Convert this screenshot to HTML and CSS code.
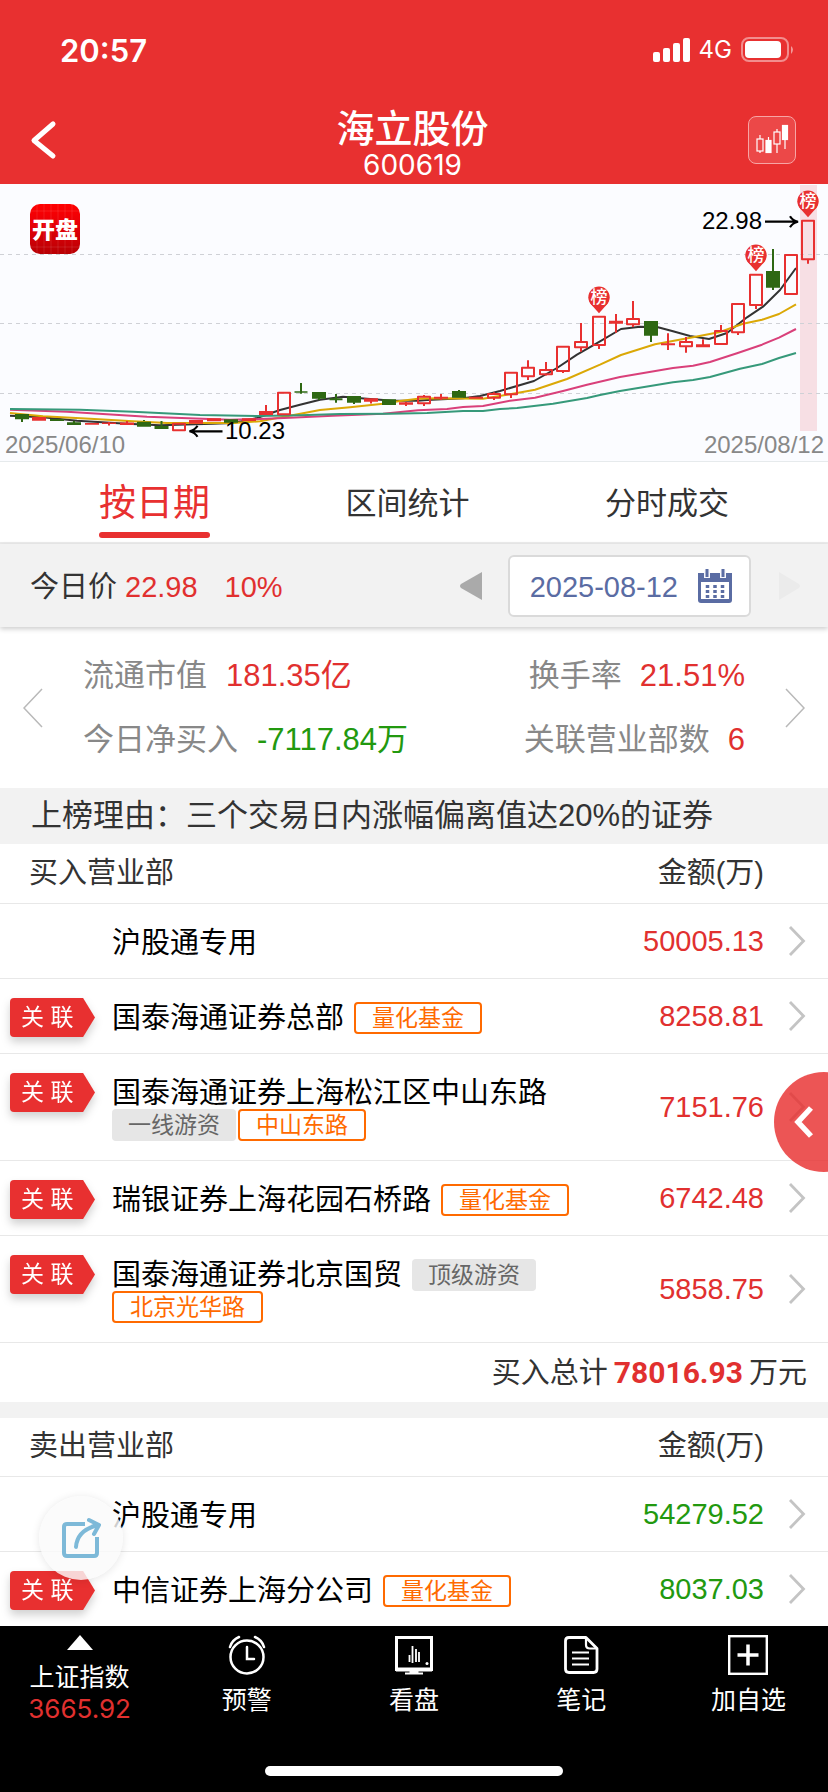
FILE: index.html
```html
<!DOCTYPE html>
<html lang="zh-CN">
<head>
<meta charset="utf-8">
<meta name="viewport" content="width=device-width, initial-scale=1">
<title>海立股份 600619</title>
<link rel="stylesheet" href="styles.css">
</head>
<body>
<div class="app">
  <header class="top">
    <div class="status">
      <span class="status-time">20:57</span>
      <div class="status-right">
        <svg width="37" height="24" viewBox="0 0 37 24" fill="#fff" aria-hidden="true"><rect x="0" y="14" width="7" height="10" rx="2"/><rect x="10" y="10" width="7" height="14" rx="2"/><rect x="20" y="5" width="7" height="19" rx="2"/><rect x="30" y="0" width="7" height="24" rx="2"/></svg>
        <span class="status-net">4G</span>
        <svg width="54" height="26" viewBox="0 0 54 26" aria-hidden="true"><rect x="1" y="1" width="46" height="23" rx="7" fill="none" stroke="#fff" stroke-opacity=".45" stroke-width="2"/><rect x="4" y="4" width="36" height="17" rx="4" fill="#fff"/><path d="M50 9q4 3.500 0 8z" fill="#fff" fill-opacity=".5"/></svg>
      </div>
    </div>
    <div class="titlebar">
      <button class="icon-btn" type="button" aria-label="返回"><svg width="30" height="42" viewBox="0 0 30 42" fill="none" stroke="#fff" stroke-width="5" stroke-linecap="round" stroke-linejoin="round"><path d="M24 5 5 21.500 24 37"/></svg></button>
      <div class="title">
        <h1>海立股份</h1>
        <p>600619</p>
      </div>
      <button class="icon-btn kline-btn" type="button" aria-label="K线"><svg width="34" height="32" viewBox="0 0 34 32" stroke="#fff" fill="none" stroke-width="1.200"><path d="M5 11v4M5 27v2M13.500 13v3M22 5v3M22 20v9M30 15v10"/><rect x="2" y="15" width="6" height="12"/><rect x="11" y="16.500" width="5" height="12" fill="#fff"/><rect x="19" y="8" width="6" height="12"/><rect x="27.500" y="1.500" width="5" height="14" fill="#fff"/></svg></button>
    </div>
  </header>

  <section class="chart">
    <svg class="chart-svg" viewBox="0 0 828 277" role="img" aria-label="日K线图">
      <defs>
        <linearGradient id="logo" x1="0" y1="0" x2="0" y2="1"><stop offset="0" stop-color="#ff0000"/><stop offset=".4" stop-color="#e80008"/><stop offset="1" stop-color="#b80004"/></linearGradient>
        <g id="pin"><path d="M-8.500 6.500 0 16 8.500 6.500z" fill="#e83030"/><circle r="10.700" fill="#e83030"/><text class="pin-text" text-anchor="middle" y="6">榜</text></g>
      </defs>
      <rect x="800" y="1" width="17" height="246" fill="#f7dfe4"/>
      <path d="M0 70.500H828M0 139.500H828M0 209.500H828" stroke="#cfd1d6" stroke-dasharray="4 4"/>
      <g fill="none" stroke-width="2" stroke-linejoin="round">
        <path stroke="#333" d="M10 231.700 43 233.300 77 236.700 127 239.700 160 241.300 213 239.700 233 239 257 234 280 226 300 220.700 320 215.700 343 212.700 367 214.700 393 216.700 418 216.700 427 216 463 214.300 480 212 500 207 534 197 557 184 577 170.700 600 157.300 621 145 640 142.700 658 143.300 673 147.300 690 152 709 155 727 149 747 133.300 763 122.700 780 106 796 84"/>
        <path stroke="#dba806" d="M10 229 43 232.300 90 234.700 133 237.300 167 239 233 239 260 237.300 280 233.500 303 229.300 320 226 350 223.300 383 219.700 400 217 418 214.700 437 214.300 483 214.700 510 210.300 535 205.700 567 195 600 180.700 621 171 655 160.300 693 153.300 720 148 743 139.700 762 135.700 779 130 796 120.300"/>
        <path stroke="#d9407a" d="M10 225.700 67 227.700 147 232.700 230 235.700 260 235 290 233.700 333 231.700 383 229.700 418 226.300 447 225 463 223 483 222 510 216.700 535 213.700 563 207 587 200.700 620 193 673 184 693 181.700 710 178 737 169.300 762 160.700 779 153.700 796 145"/>
        <path stroke="#36997a" d="M10 225 80 225.700 133 227.700 200 231 257 232 300 231.300 340 230 390 229.700 427 229 463 227 483 227 500 225 517 224 553 219.700 587 214 600 211 620 207 673 198.300 693 196 710 193 740 184.700 762 180 779 174 796 169"/>
      </g>
      <g fill="none" stroke="#e83030">
        <path stroke-width="14" d="M39 233v3.700M92 239v1.700M109 238.500v1.500M127 238.500v2.500M196 236v3.700M214 234.300v3M249 234.300v2.700M266 227v4M371 214.300v3.400M406 218.300v2.400M441 212.700v2M476 212.700v2M616 136.700v3M668 159.300v2M703 160.300v3"/>
        <path stroke-width="2" stroke-linejoin="round" d="M173 239.700h12v6.600h-12zM278 208.700h12v21.600h-12zM418 212.700h12v6.600h-12zM488 210h12v3.700h-12zM505 188.700h12v21.600h-12zM522 183.700h12v8.600h-12zM540 186h12v4.300h-12zM557 162.700h12v24.300h-12zM575 158h12v5.300h-12zM593 132.700h12v28.300h-12zM627 135h12v5.300h-12zM680 158h12v4.300h-12zM715 147h12v13h-12zM732 120h12v28.300h-12zM750 90.700h12v30.300h-12zM785 71h12v39h-12zM802 36.700h12v38.600h-12z"/>
        <path stroke-width="2" d="M109 238v3.500M127 237v3M266 221v7M406 218v4M371 217v2.500M424 211v2M424 219v3M441 210v6M494 208.300v2M494 214v2M511 210v4M528 176.300v7.400M528 192v4M546 178v8M546 190v1.500M563 187v2M581 139v19M581 163v4.700M599 161v4M616 130v18.700M633 117v18M633 140v3M668 149.300v16.700M686 153v5M686 162v6.700M703 155.300v6M721 141v6M738 148v3M756 121v4M808 75v4.700"/>
      </g>
      <g fill="none" stroke="#2e6813">
        <path stroke-width="14" d="M22 230v5.300M57 235v2M74 238.300v2.700M144 237.700v5M161.500 242v3M231 235.300v3.400M319 208v6.700M354 212v6.700M389 215.300v5.700M459 207v6.700M651 137v14.700M773 87v16.700"/>
        <path stroke-width="13" d="M301 207.300v1.400M336 214.300v2"/>
        <path stroke-width="2" d="M22 235v3M74 237v2M161.500 237v6M144 237v-1M301 199v10.700M319 214v2M336 210v8.700M354 218v2M459 206v2M651 151v7M773 65v41"/>
      </g>
      <g fill="none" stroke="#000" stroke-width="2.200"><path d="M191 247.300H222.500M197.500 241.800Q195 246 189.500 247.300Q195 248.600 197.500 252.800"/><path d="M765 37.700H796M790 32.200Q792.500 36.400 798 37.700Q792.500 39 790 43.200"/></g>
      <use href="#pin" x="599" y="113.300"/><use href="#pin" x="756" y="71.300"/><use href="#pin" x="808" y="17.300"/>
      <text class="chart-price" x="225" y="255">10.23</text>
      <text class="chart-price" x="702" y="45">22.98</text>
      <text class="chart-date" x="5" y="269">2025/06/10</text>
      <text class="chart-date" x="824" y="269" text-anchor="end">2025/08/12</text>
      <rect x="30" y="20" width="50" height="50" rx="10" fill="url(#logo)"/>
      <path d="M37 20v50M44 20v50M51 20v50M58 20v50M65 20v50M72 20v50M30 27h50M30 63h50" stroke="#fff" stroke-opacity=".1"/>
      <text class="logo-text" x="55" y="54" text-anchor="middle">开盘</text>
    </svg>
  </section>

  <nav class="tabs">
    <a class="tab tab-active" href="#date">按日期</a>
    <a class="tab" href="#range">区间统计</a>
    <a class="tab" href="#ticks">分时成交</a>
  </nav>

  <section class="pricebar">
    <span class="price-label">今日价</span>
    <span class="price-now red">22.98</span>
    <span class="red">10%</span>
    <button class="icon-btn prev-day" type="button" aria-label="前一日"><svg width="22" height="28" viewBox="0 0 22 28"><path d="M22 0v28L1 16q-2-2 0-4z" fill="#aaa"/></svg></button>
    <button class="datebox" type="button"><span>2025-08-12</span>
      <svg width="34" height="34" viewBox="0 0 34 34" aria-hidden="true"><path d="M0 4h34v27q0 3-3 3H3q-3 0-3-3z" fill="#5a6ca3"/><path d="M3 13h28v17H3z" fill="#fff"/><path d="M9 1v8M25 1v8" stroke="#f7f7fb" stroke-width="6"/><path d="M9 0v8M25 0v8" stroke="#5a6ca3" stroke-width="3"/><path d="M9.500 16v13M17 16v13M24.500 16v13" stroke="#5a6ca3" stroke-width="3.500" stroke-dasharray="3 2"/></svg>
    </button>
    <button class="icon-btn" type="button" aria-label="后一日" disabled><svg width="22" height="28" viewBox="0 0 22 28"><path d="M0 0v28L20 16q2-2 0-4z" fill="#ebebeb"/></svg></button>
  </section>

  <section class="stats">
    <button class="icon-btn" type="button" aria-label="上一页"><svg width="20" height="40" viewBox="0 0 20 40" fill="none" stroke="#b9b9b9" stroke-width="1.500"><path d="M19 1 1 20 19 39"/></svg></button>
    <dl class="stats-grid">
      <div><dt>流通市值</dt><dd class="red">181.35亿</dd></div>
      <div><dt>换手率</dt><dd class="red">21.51%</dd></div>
      <div><dt>今日净买入</dt><dd class="green">-7117.84万</dd></div>
      <div><dt>关联营业部数</dt><dd class="red">6</dd></div>
    </dl>
    <button class="icon-btn" type="button" aria-label="下一页"><svg width="20" height="40" viewBox="0 0 20 40" fill="none" stroke="#b9b9b9" stroke-width="1.500"><path d="M1 1 19 20 1 39"/></svg></button>
  </section>

  <p class="reason">上榜理由：三个交易日内涨幅偏离值达20%的证券</p>

  <svg class="defs" aria-hidden="true"><symbol id="chev" viewBox="0 0 18 32"><path d="M2 2 15.500 16 2 30" fill="none" stroke="#c4c4c4" stroke-width="2.800"/></symbol></svg>

  <main class="lists">
    <table class="seats">
      <colgroup><col class="c-badge"><col><col class="c-amt"><col class="c-go"></colgroup>
      <thead><tr><th class="th-name" colspan="2" scope="col">买入营业部</th><th class="th-amt" scope="col">金额(万)</th><th></th></tr></thead>
      <tbody>
        <tr><td></td><td class="seat"><div class="names"><span class="name">沪股通专用</span></div></td><td class="amt red">50005.13</td><td class="go"><svg><use href="#chev"/></svg></td></tr>
        <tr><td class="badge-cell"><div class="badge"><span>关 联</span></div></td><td class="seat"><div class="names"><span class="name">国泰海通证券总部</span><span class="tag">量化基金</span></div></td><td class="amt red">8258.81</td><td class="go"><svg><use href="#chev"/></svg></td></tr>
        <tr><td class="badge-cell"><div class="badge"><span>关 联</span></div></td><td class="seat"><div class="names"><span class="name">国泰海通证券上海松江区中山东路</span><span class="tag tag-grey">一线游资</span><span class="tag">中山东路</span></div></td><td class="amt red">7151.76</td><td class="go"><svg><use href="#chev"/></svg></td></tr>
        <tr><td class="badge-cell"><div class="badge"><span>关 联</span></div></td><td class="seat"><div class="names"><span class="name">瑞银证券上海花园石桥路</span><span class="tag">量化基金</span></div></td><td class="amt red">6742.48</td><td class="go"><svg><use href="#chev"/></svg></td></tr>
        <tr><td class="badge-cell"><div class="badge"><span>关 联</span></div></td><td class="seat"><div class="names"><span class="name">国泰海通证券北京国贸</span><span class="tag tag-grey">顶级游资</span><span class="tag">北京光华路</span></div></td><td class="amt red">5858.75</td><td class="go"><svg><use href="#chev"/></svg></td></tr>
      </tbody>
    </table>
    <p class="total">买入总计<strong>78016.93</strong>万元</p>
    <table class="seats seats-sell">
      <colgroup><col class="c-badge"><col><col class="c-amt"><col class="c-go"></colgroup>
      <thead><tr><th class="th-name" colspan="2" scope="col">卖出营业部</th><th class="th-amt" scope="col">金额(万)</th><th></th></tr></thead>
      <tbody>
        <tr><td></td><td class="seat"><div class="names"><span class="name">沪股通专用</span></div></td><td class="amt green">54279.52</td><td class="go"><svg><use href="#chev"/></svg></td></tr>
        <tr><td class="badge-cell"><div class="badge"><span>关 联</span></div></td><td class="seat"><div class="names"><span class="name">中信证券上海分公司</span><span class="tag">量化基金</span></div></td><td class="amt green">8037.03</td><td class="go"><svg><use href="#chev"/></svg></td></tr>
      </tbody>
    </table>
    <button class="drawer" type="button" aria-label="展开"><svg width="24" height="34" viewBox="0 0 24 34" fill="none" stroke="#fff" stroke-width="5.500"><path d="M19 3 6 17 19 31"/></svg></button>
    <button class="share" type="button" aria-label="分享"><svg width="40" height="42" viewBox="0 0 40 42" fill="none" stroke="#7db9d8" stroke-width="4" stroke-linecap="round" stroke-linejoin="round"><path stroke-linecap="butt" d="M24 7H6Q3 7 3 10V36Q3 39 6 39H33Q36 39 36 36V20"/><path d="M15 30Q16 14 35 8.500M28 3 38 8 33 17"/></svg></button>
  </main>

  <footer class="bottom">
    <nav class="bottom-nav">
      <a class="nav-item" href="#index"><svg width="26" height="15" viewBox="0 0 26 15"><path d="M13 0 26 15H0z" fill="#fff"/></svg><span>上证指数</span><span class="index-value">3665.92</span></a>
      <a class="nav-item" href="#alert"><svg width="40" height="40" viewBox="0 0 40 40" fill="none" stroke="#fff" stroke-width="2.500" stroke-linecap="round"><circle cx="20" cy="22" r="16.500"/><path d="M20 12V24H27M3 12Q5 5 12 2M37 12Q35 5 28 2"/></svg><span>预警</span></a>
      <a class="nav-item" href="#watch"><svg width="40" height="40" viewBox="0 0 40 40" fill="none" stroke="#fff"><rect x="2.500" y="2.500" width="35" height="32" stroke-width="3"/><path d="M2 34.500H38" stroke-width="4"/><path d="M16 36h8v2h-8z" fill="#fff"/><path d="M11 38.500H29" stroke-width="2"/><path d="M15.500 20v7M18.500 11v17M22 14v13M25 17v10" stroke-width="1.800"/><circle cx="33" cy="28.500" r="1.500" fill="#fff" stroke="none"/></svg><span>看盘</span></a>
      <a class="nav-item" href="#notes"><svg width="40" height="40" viewBox="0 0 40 40" fill="none" stroke="#fff" stroke-width="2.800" stroke-linejoin="round"><path d="M25 2.500H8Q4.500 2.500 4.500 6V34Q4.500 37.500 8 37.500H32.500Q36 37.500 36 34V13.500z"/><path d="M25 3V10Q25 13.500 29 13.500H36" stroke-width="2.200"/><path d="M11 17.500H28M11 23.500H28M11 29.500H28" stroke-width="2"/></svg><span>笔记</span></a>
      <a class="nav-item" href="#add"><svg width="40" height="40" viewBox="0 0 40 40" fill="none" stroke="#fff"><rect x="1.200" y="1.200" width="37.600" height="37.600" stroke-width="2.400"/><path d="M20 9.500V30.500M9.500 20H30.500" stroke-width="3.500"/></svg><span>加自选</span></a>
    </nav>
    <div class="home-bar"></div>
  </footer>
</div>
</body>
</html>
```
FILE: styles.css
```css
* { box-sizing: border-box; }

body {
  margin: 0;
  background: #fff;
  color: #333;
  font-family: "Liberation Sans", "Noto Sans CJK SC", sans-serif;
  font-size: 29px;
}

h1, p, dl, dd { margin: 0; }
a { color: inherit; text-decoration: none; }
svg { display: block; }
button { font: inherit; color: inherit; padding: 0; border: 0; background: none; }

.app {
  display: flex;
  flex-direction: column;
  min-height: 100vh;
  overflow: hidden;
}

.red { color: #e1302f; }
.green { color: #22990f; }
.icon-btn { display: flex; align-items: center; justify-content: center; }

/* header */
.top { background: #e83030; color: #fff; }

.status {
  display: flex;
  justify-content: space-between;
  align-items: center;
  height: 100px;
  padding: 0 33px 0 60px;
  font-family: Inter, sans-serif;
}
.status-time { font-size: 31px; font-weight: 600; }
.status-right { display: flex; align-items: center; gap: 9px; }
.status-net { font-size: 24px; line-height: 24px; }

.titlebar {
  display: flex;
  justify-content: space-between;
  height: 84px;
  padding: 0 32px 0 29px;
}
.titlebar > .icon-btn { height: 48px; margin-top: 16px; }
.title { text-align: center; margin-left: 18px; padding-top: 8px; }
.title h1 { font-size: 38px; line-height: 42px; font-weight: 500; }
.title p { font-family: Inter, sans-serif; font-size: 28px; line-height: 31px; }
.kline-btn {
  width: 48px;
  border: 1px solid #f7a5a5;
  border-radius: 8px;
  background: #ec4848;
}

/* chart */
.chart { background: #fbfcff; border-bottom: 1px solid #e6eaec; }
.chart-svg { width: 100%; height: auto; }
.chart-price { font-size: 24px; fill: #000; }
.chart-date { font-size: 24px; fill: #888; }
.pin-text { font-size: 17px; font-weight: 500; fill: #fff; }
.logo-text { font-size: 23px; font-weight: 900; fill: #fff; }

/* tabs */
.tabs {
  display: flex;
  justify-content: space-between;
  height: 82px;
  padding: 0 99px;
  border-bottom: 2px solid #ececec;
}
.tab { padding-top: 14px; font-size: 31px; line-height: 56px; }
.tab-active {
  display: flex;
  flex-direction: column;
  justify-content: space-between;
  height: 76px;
  font-size: 37px;
  color: #e83030;
}
.tab-active::after { content: ""; height: 6px; border-radius: 3px; background: #e83030; }

/* price and date */
.pricebar {
  position: relative;
  display: flex;
  align-items: center;
  height: 83px;
  padding: 0 27px 0 31px;
  background: #f2f2f2;
  box-shadow: 0 2px 5px rgba(0, 0, 0, 0.2);
  line-height: 40px;
}
.pricebar > span, .datebox > span { padding-top: 2px; }
.price-label { margin-left: -1px; }
.price-now { margin: 0 27px 0 8px; }
.prev-day { margin-left: auto; }
.datebox {
  display: flex;
  align-items: center;
  gap: 20px;
  height: 62px;
  margin: 0 28px 0 26px;
  padding: 0 17px 0 20px;
  border: 2px solid #dadada;
  border-radius: 6px;
  background: #fff;
  color: #5a6ca3;
}

/* stats */
.stats {
  display: flex;
  align-items: center;
  height: 161px;
  padding: 0 23px;
}
.stats-grid {
  flex: 1;
  display: grid;
  grid-template-columns: auto auto;
  justify-content: space-between;
  row-gap: 24px;
  padding: 0 40px;
  font-size: 31px;
  line-height: 40px;
}
.stats-grid > div { display: flex; gap: 19px; }
.stats-grid > div:nth-child(even) { justify-content: flex-end; gap: 18px; }
.stats-grid dt { color: #888; }

.reason {
  padding: 0 31px;
  background: #f2f2f2;
  font-size: 31px;
  line-height: 56px;
}

/* broker lists */
.defs { position: absolute; width: 0; height: 0; }
.lists { position: relative; flex: 1; }
.seats { width: 100%; table-layout: fixed; border-collapse: separate; border-spacing: 0; }
.c-badge { width: 112px; }
.c-amt { width: 170px; }
.c-go { width: 64px; }
.seats th, .seats td { padding: 0; border-bottom: 1px solid #e8e8e8; }
.seats th { height: 60px; padding-bottom: 8px; font-weight: 400; }
.seats-sell th { height: 59px; }
.seats .th-name { padding-left: 29px; text-align: left; }
.seats .th-amt { text-align: right; }
.seats .seat { padding: 23px 0 19px; vertical-align: top; }
.names { display: flex; flex-wrap: wrap; column-gap: 2px; color: #000; line-height: 32px; }
.name { margin-right: 8px; }
.tag {
  height: 32px;
  padding: 0 16px;
  border: 2px solid #ff6a00;
  border-radius: 4px;
  color: #ff6a00;
  font-size: 23px;
  line-height: 28px;
}
.tag-grey { border-width: 2px 0; border-color: #e6e6e6; background: #e6e6e6; color: #666; }
.amt { text-align: right; }
.go svg { width: 18px; height: 32px; margin-left: 24px; }
.seats .badge-cell { padding: 19px 0 0 10px; vertical-align: top; }
.badge { width: 85px; filter: drop-shadow(0 5px 4px rgba(0, 0, 0, 0.18)); }
.badge span {
  display: block;
  padding-left: 11px;
  border-radius: 4px 0 0 4px;
  background: #e83030;
  clip-path: polygon(0 0, 86% 0, 100% 50%, 86% 100%, 0 100%);
  color: #fff;
  font-size: 23px;
  line-height: 39px;
}
.seats-sell tbody tr:last-child td { border-bottom: 0; }

.total {
  padding: 2px 21px 0 0;
  border-bottom: 16px solid #f2f2f2;
  text-align: right;
  line-height: 57px;
}
.total strong { margin: 0 6px; font-family: Roboto, sans-serif; font-size: 30px; line-height: 30px; color: #e1302f; }

/* floating buttons */
.drawer {
  position: absolute;
  top: 228px;
  right: -46px;
  width: 100px;
  height: 100px;
  padding-left: 18px;
  border-radius: 50%;
  background: rgba(232, 48, 48, 0.82);
}
.share {
  position: absolute;
  bottom: 46px;
  left: 39px;
  display: flex;
  align-items: center;
  justify-content: center;
  width: 84px;
  height: 84px;
  border-radius: 50%;
  background: rgba(250, 250, 250, 0.82);
  box-shadow: 0 1px 8px rgba(0, 0, 0, 0.1);
}

/* bottom bar */
.bottom { background: #000; color: #fff; padding-bottom: 16px; }
.bottom-nav {
  display: grid;
  grid-template-columns: repeat(5, 1fr);
  height: 140px;
  margin: 0 -4px;
  padding-top: 9px;
  font-size: 25px;
  line-height: 32px;
}
.nav-item { display: flex; flex-direction: column; align-items: center; gap: 9px; }
.nav-item:first-child { gap: 0; }
.nav-item:first-child svg { margin-bottom: 11px; }
.index-value { font-family: Inter, sans-serif; font-size: 26px; color: #e1302f; }
.home-bar { width: 36%; height: 10px; margin: 0 auto; border-radius: 5px; background: #fff; }
```
